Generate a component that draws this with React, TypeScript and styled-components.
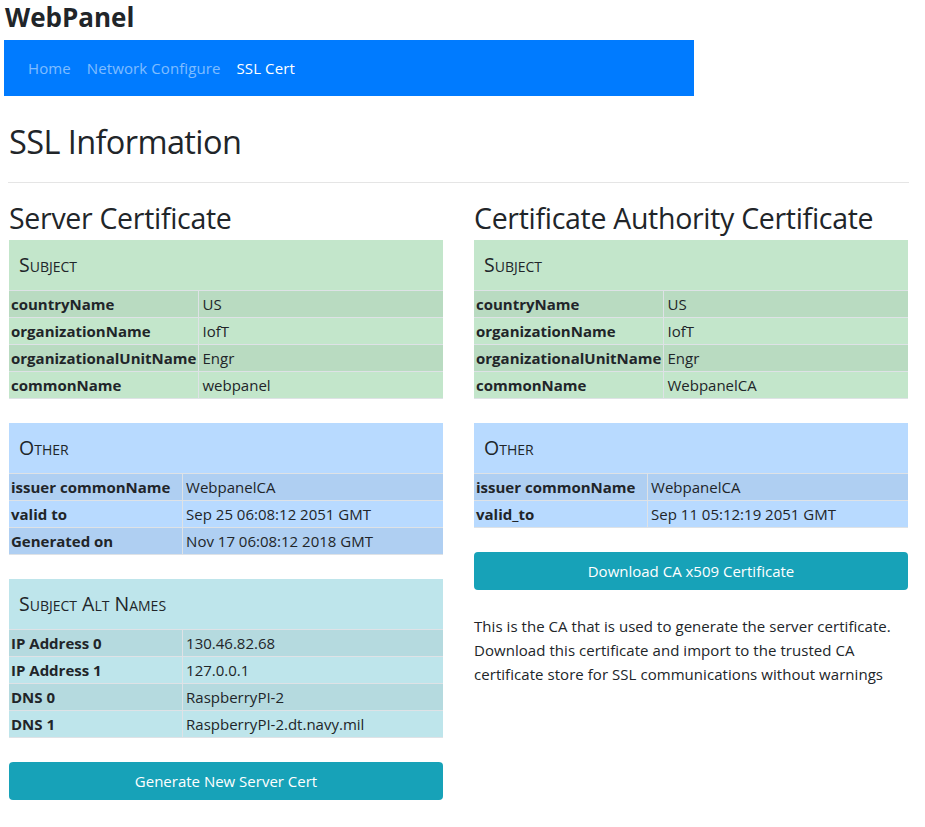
import React from "react";
import styled, { createGlobalStyle } from "styled-components";

type Row = { name: string; value: string };

type TableProps = {
  title: string;
  tone: "success" | "primary" | "info";
  rows: Row[];
};

const tones = {
  success: { bg: "#c3e6cb", stripe: "#b9dbc1" },
  primary: { bg: "#b8daff", stripe: "#afcff2" },
  info: { bg: "#bee5eb", stripe: "#b5dadf" },
};

const serverSubject: Row[] = [
  { name: "countryName", value: "US" },
  { name: "organizationName", value: "IofT" },
  { name: "organizationalUnitName", value: "Engr" },
  { name: "commonName", value: "webpanel" },
];

const serverOther: Row[] = [
  { name: "issuer commonName", value: "WebpanelCA" },
  { name: "valid to", value: "Sep 25 06:08:12 2051 GMT" },
  { name: "Generated on", value: "Nov 17 06:08:12 2018 GMT" },
];

const altNames: Row[] = [
  { name: "IP Address 0", value: "130.46.82.68" },
  { name: "IP Address 1", value: "127.0.0.1" },
  { name: "DNS 0", value: "RaspberryPI-2" },
  { name: "DNS 1", value: "RaspberryPI-2.dt.navy.mil" },
];

const caSubject: Row[] = [
  { name: "countryName", value: "US" },
  { name: "organizationName", value: "IofT" },
  { name: "organizationalUnitName", value: "Engr" },
  { name: "commonName", value: "WebpanelCA" },
];

const caOther: Row[] = [
  { name: "issuer commonName", value: "WebpanelCA" },
  { name: "valid_to", value: "Sep 11 05:12:19 2051 GMT" },
];

function CertTable({ title, tone, rows }: TableProps) {
  return (
    <S.Table $tone={tone}>
      <thead>
        <tr>
          <S.HeadCell colSpan={2}>{title}</S.HeadCell>
        </tr>
      </thead>
      <tbody>
        {rows.map((r, i) => (
          <S.BodyRow key={r.name} $tone={tone} $odd={i % 2 === 0}>
            <S.NameCell>{r.name}</S.NameCell>
            <S.ValueCell>{r.value}</S.ValueCell>
          </S.BodyRow>
        ))}
      </tbody>
    </S.Table>
  );
}

export default function App() {
  return (
    <>
      <GlobalStyle />
      <S.Brand>WebPanel</S.Brand>
      <S.Navbar>
        <S.NavLink>Home</S.NavLink>
        <S.NavLink>Network Configure</S.NavLink>
        <S.NavLink $active>SSL Cert</S.NavLink>
      </S.Navbar>
      <S.Container>
        <S.PageTitle>SSL Information</S.PageTitle>
        <S.Rule />
        <S.Columns>
          <S.Column>
            <S.SectionTitle>Server Certificate</S.SectionTitle>
            <CertTable title="Subject" tone="success" rows={serverSubject} />
            <CertTable title="Other" tone="primary" rows={serverOther} />
            <CertTable title="Subject Alt Names" tone="info" rows={altNames} />
            <S.Button>Generate New Server Cert</S.Button>
          </S.Column>
          <S.Column>
            <S.SectionTitle>Certificate Authority Certificate</S.SectionTitle>
            <CertTable title="Subject" tone="success" rows={caSubject} />
            <CertTable title="Other" tone="primary" rows={caOther} />
            <S.Button>Download CA x509 Certificate</S.Button>
            <S.Note>
              This is the CA that is used to generate the server certificate.
              Download this certificate and import to the trusted CA
              certificate store for SSL communications without warnings
            </S.Note>
          </S.Column>
        </S.Columns>
      </S.Container>
    </>
  );
}

const GlobalStyle = createGlobalStyle`
  body {
    margin: 0;
    font-family: "Open Sans", "Noto Sans", sans-serif;
    font-size: 15px;
    line-height: 1.5;
    color: #212529;
    background: #fff;
  }
`;

const S = {
  Brand: styled.div`
    font-size: 26px;
    font-weight: 700;
    line-height: 34px;
    padding-left: 5px;
    margin-bottom: 6px;
  `,
  Navbar: styled.nav`
    width: 690px;
    height: 56px;
    margin-left: 4px;
    background: #007bff;
    display: flex;
    align-items: center;
    padding: 0 16px;
    box-sizing: border-box;
  `,
  NavLink: styled.a<{ $active?: boolean }>`
    padding: 0 8px;
    color: ${(p) => (p.$active ? "#fff" : "rgba(255,255,255,0.5)")};
    font-size: 15px;
    letter-spacing: 0.1px;
    cursor: pointer;
  `,
  Container: styled.div`
    padding: 0 16px 0 9px;
  `,
  PageTitle: styled.h1`
    margin: 22px 0 0;
    font-size: 32.5px;
    font-weight: 500;
    line-height: 48px;
    letter-spacing: -0.6px;
  `,
  Rule: styled.hr`
    margin: 16px 0 16px -1px;
    border: 0;
    border-top: 1px solid #e5e5e5;
  `,
  Columns: styled.div`
    display: grid;
    grid-template-columns: 434px 434px;
    column-gap: 31px;
  `,
  Column: styled.div`
    display: flex;
    flex-direction: column;
  `,
  SectionTitle: styled.h2`
    margin: 0 0 3px;
    font-size: 28.5px;
    font-weight: 500;
    line-height: 38px;
    letter-spacing: -0.3px;
  `,
  Table: styled.table<{ $tone: keyof typeof tones }>`
    width: 100%;
    border-collapse: collapse;
    background: ${(p) => tones[p.$tone].bg};
    margin-bottom: 24px;
    font-size: 15px;
  `,
  HeadCell: styled.th`
    height: 50px;
    padding: 0 10px;
    text-align: left;
    font-weight: 400;
    font-variant: small-caps;
    font-size: 19.5px;
    border-bottom: 1px solid #dee2e6;
  `,
  BodyRow: styled.tr<{ $tone: keyof typeof tones; $odd: boolean }>`
    height: 27px;
    background: ${(p) => (p.$odd ? tones[p.$tone].stripe : "transparent")};
    border-bottom: 1px solid #dee2e6;
  `,
  NameCell: styled.td`
    padding: 0 2px;
    font-weight: 700;
    white-space: nowrap;
    width: 40%;
    border-right: 1px solid #dee2e6;
  `,
  ValueCell: styled.td`
    padding: 0 3px;
    white-space: nowrap;
  `,
  Button: styled.button`
    height: 38px;
    width: 100%;
    border: 0;
    border-radius: 4px;
    background: #17a2b8;
    color: #fff;
    font-family: inherit;
    font-size: 15px;
    cursor: pointer;
  `,
  Note: styled.p`
    margin: 24px 0 0;
    font-size: 15px;
    line-height: 24px;
    letter-spacing: 0.05px;
  `,
};
